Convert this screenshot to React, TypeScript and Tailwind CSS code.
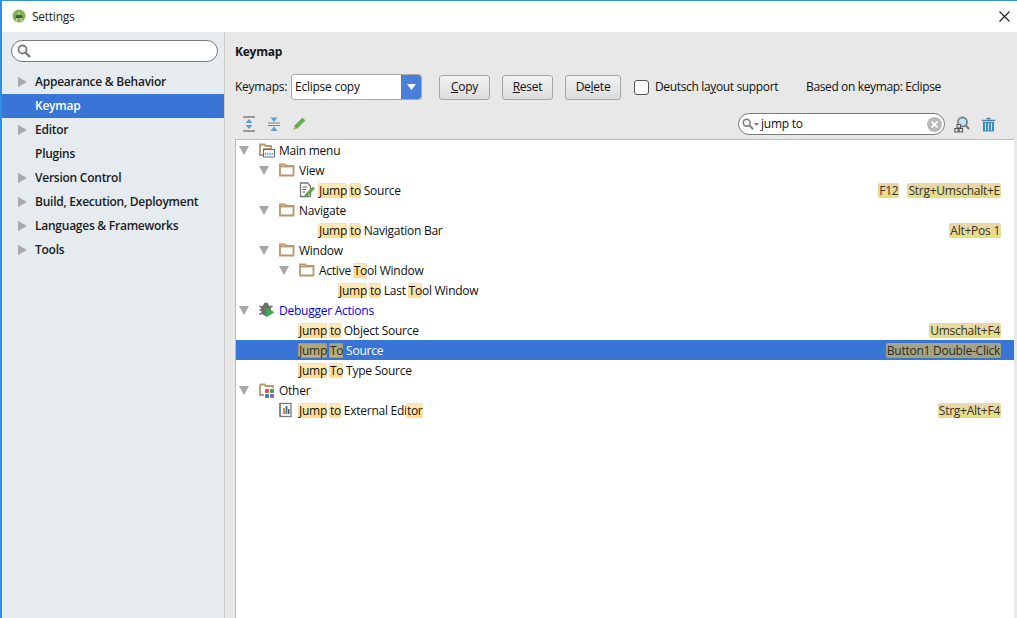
import React from 'react';

const font = { fontFamily: '"Open Sans", "Noto Sans", sans-serif' };

function Hl({ children, active }: { children: React.ReactNode; active?: boolean }) {
    return (
        <span
            className={
                active
                    ? 'inline-block h-[15px] leading-[15px] -ml-px pl-px rounded-[2px] bg-gradient-to-b from-[#aea477] to-[#bfb27a] text-[#2a2a2a] shadow-[inset_0_0_0_1px_#a09a78]'
                    : 'inline-block h-[15px] leading-[15px] -ml-px pl-px rounded-[2px] bg-gradient-to-b from-[#ffebc0] to-[#ffdc84] shadow-[inset_0_0_0_1px_#f5dfae]'
            }
        >
            {children}
        </span>
    );
}

function KeyBadge({ children, active }: { children: React.ReactNode; active?: boolean }) {
    return (
        <span
            className={
                active
                    ? 'h-[15px] leading-[15px] rounded-[2px] px-px bg-gradient-to-b from-[#a9a58a] to-[#a3a377] text-[#2b2b2b]'
                    : 'h-[15px] leading-[15px] rounded-[2px] px-px bg-gradient-to-b from-[#ead7ac] to-[#e6de7c] text-[#333]'
            }
        >
            {children}
        </span>
    );
}

function Arrow({ className }: { className: string }) {
    return (
        <svg width="9" height="10" viewBox="0 0 9 10" className={className}>
            <path d="M0 0 L9 5 L0 10 Z" fill="#a9a9a9" />
        </svg>
    );
}

function ArrowDown() {
    return (
        <svg width="10" height="9" viewBox="0 0 10 9">
            <path d="M0 0 H10 L5 9 Z" fill="#a6a6a6" />
        </svg>
    );
}

function FolderIcon() {
    return (
        <svg width="16" height="14" viewBox="0 0 16 14">
            <path d="M1 1.5 H6 L7 3 H14.5 V12.5 H1 Z" fill="#fff" stroke="#b9966a" strokeWidth="1.8" />
            <path d="M1 3.6 H14.5" stroke="#b9966a" strokeWidth="1.6" />
        </svg>
    );
}

function MainMenuIcon() {
    return (
        <svg width="16" height="15" viewBox="0 0 16 15">
            <path d="M1 1.5 H5.5 L6.5 3 H12 V6 H5 V12 H1 Z" fill="#fff" stroke="#b9966a" strokeWidth="1.8" />
            <rect x="4.5" y="6.5" width="11" height="7.5" fill="#f3f6fa" stroke="#5f6f80" />
            <path d="M6 11 H14" stroke="#4a88c7" strokeWidth="1.4" strokeDasharray="1.2 1" />
        </svg>
    );
}

function ActionEditIcon() {
    return (
        <svg width="16" height="16" viewBox="0 0 16 16">
            <path d="M1.5 1 H8.5 L11.5 4 V14.5 H1.5 Z" fill="#fff" stroke="#77797c" strokeWidth="1.3" />
            <path d="M3.5 5 H8 M3.5 7.5 H7 M3.5 10 H6" stroke="#666" strokeWidth="1.1" />
            <path d="M14 5 L15.5 6.5 L8.5 14 L5.5 15 L6.5 12 Z" fill="#5dab4d" stroke="#3d8a3a" strokeWidth="0.5" />
        </svg>
    );
}

function BugIcon() {
    return (
        <svg width="16" height="16" viewBox="0 0 16 16">
            <ellipse cx="7" cy="8" rx="5" ry="6" fill="#6e6e6e" />
            <circle cx="7" cy="2.8" r="2.4" fill="#6e6e6e" />
            <path d="M0.5 4 L4 6 M0.5 8 H3 M0.5 12.5 L4 10.5 M13.5 4 L10 6" stroke="#6e6e6e" strokeWidth="1.5" />
            <path d="M7 5.5 L15.5 10.2 L7 15.5 Z" fill="#3fa652" />
        </svg>
    );
}

function OtherIcon() {
    return (
        <svg width="16" height="15" viewBox="0 0 16 15">
            <path d="M1 1.5 H5.5 L6.5 3 H14 V5 M5 12 H1 V1.5" fill="#fff" stroke="#b9966a" strokeWidth="1.8" />
            <rect x="6" y="6" width="4" height="4" rx="1" fill="#d9534f" />
            <rect x="11" y="6" width="4" height="4" rx="1" fill="#4a9d5b" />
            <rect x="6" y="11" width="4" height="4" rx="1" fill="#3f7fc4" />
            <rect x="11" y="11" width="4" height="4" rx="1" fill="#8a63b8" />
        </svg>
    );
}

function ExternalIcon() {
    return (
        <svg width="14" height="16" viewBox="0 0 14 16">
            <rect x="1" y="1.5" width="11" height="13" fill="#fff" stroke="#77797c" strokeWidth="1.3" />
            <path d="M1 1 V15" stroke="#555" strokeWidth="1.4" strokeDasharray="1 1" />
            <rect x="4" y="6" width="2" height="6" fill="#d9874a" />
            <rect x="6.5" y="4" width="2" height="8" fill="#3f7fc4" />
            <rect x="9" y="7" width="1.5" height="5" fill="#555" />
        </svg>
    );
}

function SearchGlyph({ size = 14 }: { size?: number }) {
    return (
        <svg width={size} height={size} viewBox="0 0 14 14">
            <circle cx="5.5" cy="5.5" r="4" fill="none" stroke="#7c7c7c" strokeWidth="1.8" />
            <path d="M8.5 8.5 L13 13" stroke="#7c7c7c" strokeWidth="2.4" />
        </svg>
    );
}

function ExpandIcon() {
    return (
        <svg width="14" height="16" viewBox="0 0 14 16">
            <path d="M1 1 H13 M1 15 H13" stroke="#808080" strokeWidth="1.5" />
            <path d="M7 3 L10.5 7 H3.5 Z M7 13 L3.5 9 H10.5 Z" fill="#5a9fcf" />
        </svg>
    );
}

function CollapseIcon() {
    return (
        <svg width="14" height="16" viewBox="0 0 14 16">
            <path d="M1 7 H13 M1 9.5 H13" stroke="#808080" strokeWidth="1.2" />
            <path d="M7 6 L3.5 1.5 H10.5 Z M7 10.5 L10.5 15 H3.5 Z" fill="#5a9fcf" />
        </svg>
    );
}

function PencilIcon() {
    return (
        <svg width="14" height="14" viewBox="0 0 14 14">
            <path d="M10.5 1 L13 3.5 L5 11.5 L2.5 9 Z" fill="#62b04f" stroke="#4a9440" strokeWidth="0.5" />
            <path d="M2.5 9 L5 11.5 L1 13 Z" fill="#b9a46e" />
        </svg>
    );
}

function FindShortcutIcon() {
    return (
        <svg width="16" height="17" viewBox="0 0 16 17">
            <circle cx="8.5" cy="6" r="4.6" fill="#bfe0f2" stroke="#6f7a84" strokeWidth="1.6" />
            <path d="M11.8 9.5 L15 13" stroke="#6f7a84" strokeWidth="2" />
            <rect x="3" y="8.5" width="3.5" height="3.5" fill="#ddd" stroke="#555" />
            <rect x="0.8" y="12.5" width="3.5" height="3.5" fill="#ddd" stroke="#555" />
            <rect x="5.2" y="12.5" width="3.5" height="3.5" fill="#ddd" stroke="#555" />
        </svg>
    );
}

function TrashIcon() {
    return (
        <svg width="15" height="15" viewBox="0 0 15 15">
            <path d="M5.5 1.5 H9.5 M0.8 3.5 H14.2" stroke="#4d7f9f" strokeWidth="1.6" />
            <path d="M2 5 H13 V14.5 H2 Z" fill="#3d8dc4" />
            <path d="M4.5 6 V13.5 M7.5 6 V13.5 M10.5 6 V13.5" stroke="#d3e8f5" strokeWidth="1" />
        </svg>
    );
}

function AndroidLogo() {
    return (
        <svg width="16" height="16" viewBox="0 0 16 16">
            <circle cx="7" cy="7" r="6.5" fill="#7fb24f" />
            <path d="M3.5 9 A3.5 3.5 0 0 1 10.5 9 Z" fill="#3c5a35" />
            <path d="M7 3 V6 M3 14 L5.5 9 M11 14 L8.5 9" stroke="#d9d9d9" strokeWidth="1.2" />
        </svg>
    );
}

const sideItems = [
    { label: 'Appearance & Behavior', arrow: true },
    { label: 'Keymap', selected: true },
    { label: 'Editor', arrow: true },
    { label: 'Plugins' },
    { label: 'Version Control', arrow: true },
    { label: 'Build, Execution, Deployment', arrow: true },
    { label: 'Languages & Frameworks', arrow: true },
    { label: 'Tools', arrow: true },
];

interface RowProps {
    depth: number;
    open?: boolean;
    icon?: React.ReactNode;
    selected?: boolean;
    keys?: string[];
    children: React.ReactNode;
}

function Row({ depth, open, icon, selected, keys, children }: RowProps) {
    return (
        <div className={`flex items-center h-5 pr-[13px] ${selected ? 'bg-[#3875d7] text-white' : 'text-[#101010]'}`}>
            <div className="flex items-center shrink-0" style={{ paddingLeft: 3 + depth * 20 }}>
                <span className="w-5 flex items-center">{open && <ArrowDown />}</span>
                <span className="w-5 flex items-center">{icon}</span>
            </div>
            <div className="whitespace-pre pt-[2px]">{children}</div>
            <div className="ml-auto flex gap-2">
                {keys?.map((k) => (
                    <KeyBadge key={k} active={selected}>
                        {k}
                    </KeyBadge>
                ))}
            </div>
        </div>
    );
}

function Button({ w, children }: { w: string; children: React.ReactNode }) {
    return (
        <button
            className={`${w} h-[25px] rounded-[3px] border border-[#a4a4a4] bg-gradient-to-b from-[#f2f2f2] to-[#dcdcdc] text-[#111] text-center`}
        >
            {children}
        </button>
    );
}

export default function App() {
    return (
        <div
            className="w-[1017px] h-[618px] overflow-hidden flex flex-col bg-white border-t border-l-2 border-[#2f8fe0] text-[12px] tracking-[-0.25px]"
            style={font}
        >
            {/* Title bar */}
            <div className="h-[31px] shrink-0 flex items-center pl-[10px] pr-[7px] bg-white">
                <AndroidLogo />
                <span className="ml-[4px] text-[#222]">Settings</span>
                <svg width="11" height="11" viewBox="0 0 11 11" className="ml-auto">
                    <path d="M0.5 0.5 L10.5 10.5 M10.5 0.5 L0.5 10.5" stroke="#222" strokeWidth="1.1" />
                </svg>
            </div>

            <div className="flex-1 flex min-h-0">
                {/* Sidebar */}
                <div className="w-[223px] shrink-0 bg-[#e6ebf0] border-r border-[#c9c9c9] pt-2">
                    <div className="ml-[9px] mr-[6px] h-[22px] rounded-full border border-[#7a7a7a] bg-white flex items-center pl-[5px]">
                        <SearchGlyph />
                    </div>
                    <div className="mt-2">
                        {sideItems.map((item) => (
                            <div
                                key={item.label}
                                className={`h-6 flex items-center font-semibold ${
                                    item.selected ? 'bg-[#3875d7] text-white' : 'text-[#1b1b1b]'
                                }`}
                            >
                                <span className="w-[33px] pl-4 flex items-center">
                                    {item.arrow && <Arrow className="block" />}
                                </span>
                                {item.label}
                            </div>
                        ))}
                    </div>
                </div>

                {/* Main panel */}
                <div className="flex-1 bg-[#e8e8e8] flex flex-col min-w-0">
                    <div className="pl-[10px] pt-[11px] h-[42px] font-bold text-[#151515]">Keymap</div>

                    <div className="pl-[10px] h-[26px] flex items-center text-[#111]">
                        <span className="w-[56px]">Keymaps:</span>
                        <div className="w-[131px] h-[26px] rounded-[3px] border border-[#a9a9a9] bg-white flex items-center">
                            <span className="pl-[3px] flex-1">Eclipse copy</span>
                            <span className="w-[20px] h-full rounded-r-[3px] bg-[#4a7fd8] flex items-center justify-center">
                                <svg width="9" height="6" viewBox="0 0 9 6">
                                    <path d="M0 0 H9 L4.5 6 Z" fill="#fff" />
                                </svg>
                            </span>
                        </div>
                        <div className="ml-[17px] flex gap-3">
                            <Button w="w-[51px]">
                                <u>C</u>opy
                            </Button>
                            <Button w="w-[51px]">
                                <u>R</u>eset
                            </Button>
                            <Button w="w-[56px]">
                                De<u>l</u>ete
                            </Button>
                        </div>
                        <span className="ml-[13px] w-[15px] h-[15px] rounded-[3px] border border-[#555] bg-white" />
                        <span className="ml-[6px] w-[151px] tracking-[-0.35px]">
                            Deutsch la<u>y</u>out support
                        </span>
                        <span className="tracking-[-0.37px]">Based on keymap: Eclipse</span>
                    </div>

                    <div className="h-[39px] flex items-center pl-[17px] pr-[21px] pt-[9px]">
                        <ExpandIcon />
                        <span className="ml-[11px]">
                            <CollapseIcon />
                        </span>
                        <span className="ml-[11px]">
                            <PencilIcon />
                        </span>
                        <div className="ml-auto mr-[9px] w-[207px] h-[22px] rounded-full border border-[#7a7a7a] bg-white flex items-center pl-[3px] pr-[2px]">
                            <SearchGlyph size={12} />
                            <svg width="5" height="3" viewBox="0 0 5 3" className="mr-[2px]">
                                <path d="M0 0 H5 L2.5 3 Z" fill="#777" />
                            </svg>
                            <span className="text-[#111]">jump to</span>
                            <span className="ml-auto w-[15px] h-[15px] rounded-full bg-[#b9b9b9] flex items-center justify-center">
                                <svg width="7" height="7" viewBox="0 0 7 7">
                                    <path d="M0.5 0.5 L6.5 6.5 M6.5 0.5 L0.5 6.5" stroke="#fff" strokeWidth="1.7" />
                                </svg>
                            </span>
                        </div>
                        <FindShortcutIcon />
                        <span className="ml-[11px]">
                            <TrashIcon />
                        </span>
                    </div>

                    {/* Keymap tree */}
                    <div className="flex-1 ml-[10px] mr-[3px] bg-white border-t border-l border-[#bdbdbd]">
                        <Row depth={0} open icon={<MainMenuIcon />}>
                            Main menu
                        </Row>
                        <Row depth={1} open icon={<FolderIcon />}>
                            View
                        </Row>
                        <Row depth={2} icon={<ActionEditIcon />} keys={['F12', 'Strg+Umschalt+E']}>
                            <Hl>Jump</Hl> <Hl>to</Hl> Source
                        </Row>
                        <Row depth={1} open icon={<FolderIcon />}>
                            Navigate
                        </Row>
                        <Row depth={2} keys={['Alt+Pos 1']}>
                            <Hl>Jump</Hl> <Hl>to</Hl> Navigation Bar
                        </Row>
                        <Row depth={1} open icon={<FolderIcon />}>
                            Window
                        </Row>
                        <Row depth={2} open icon={<FolderIcon />}>
                            Active <Hl>To</Hl>ol Window
                        </Row>
                        <Row depth={3}>
                            <Hl>Jump</Hl> <Hl>to</Hl> Last <Hl>To</Hl>ol Window
                        </Row>
                        <Row depth={0} open icon={<BugIcon />}>
                            <span className="text-[#0000ee]">Debugger Actions</span>
                        </Row>
                        <Row depth={1} keys={['Umschalt+F4']}>
                            <Hl>Jump</Hl> <Hl>to</Hl> Object Source
                        </Row>
                        <Row depth={1} selected keys={['Button1 Double-Click']}>
                            <Hl active>Jump</Hl> <Hl active>To</Hl> Source
                        </Row>
                        <Row depth={1}>
                            <Hl>Jump</Hl> <Hl>To</Hl> Type Source
                        </Row>
                        <Row depth={0} open icon={<OtherIcon />}>
                            Other
                        </Row>
                        <Row depth={1} icon={<ExternalIcon />} keys={['Strg+Alt+F4']}>
                            <Hl>Jump</Hl> <Hl>to</Hl> External Edi<Hl>tor</Hl>
                        </Row>
                    </div>
                </div>
            </div>
        </div>
    );
}
